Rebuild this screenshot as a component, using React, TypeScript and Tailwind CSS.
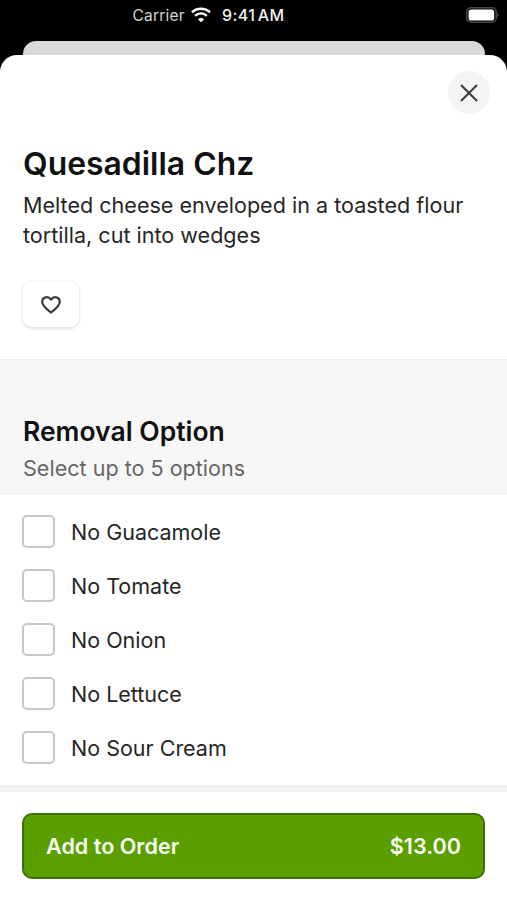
import React, { useState } from 'react';

const OPTIONS = ['No Guacamole', 'No Tomate', 'No Onion', 'No Lettuce', 'No Sour Cream'];

const StatusBar: React.FC = () => (
  <div className="h-[30px] shrink-0 flex items-center pl-[132.5px] pr-[8px] text-white">
    <span className="pt-px text-[15.5px] leading-[30px] text-[#d4d4d4] tracking-[0.2px] whitespace-nowrap w-[53px]">Carrier</span>
    <svg className="ml-[5.5px] w-[20px] h-[16px]" viewBox="0 0 20 16" fill="none" stroke="currentColor">
      <path d="M1 5.3C6 .6 14 .6 19 5.3" strokeWidth="2.6" />
      <path d="M4.1 8.8c3.5-3.1 8.3-3.1 11.8 0" strokeWidth="2.4" />
      <path d="M10 15.2 6.9 12.2c1.8-1.6 4.4-1.6 6.2 0z" fill="currentColor" stroke="none" />
    </svg>
    <span className="ml-[11px] text-[16px] leading-[30px] font-medium text-[#f2f2f2] whitespace-nowrap tracking-[0.45px] [word-spacing:-2.5px]">9:41 AM</span>
    <svg className="ml-auto w-[33px] h-[16px]" viewBox="0 0 33 16" fill="none">
      <rect x=".8" y=".8" width="29.4" height="14.4" rx="4.2" stroke="#484848" strokeWidth="1.5" />
      <rect x="2.6" y="2.5" width="25.6" height="11" rx="2.6" fill="#fff" />
      <path d="M31.3 5.6c1.6.7 1.6 4.1 0 4.8z" fill="#555" />
    </svg>
  </div>
);

const App: React.FC = () => {
  const [selected, setSelected] = useState<string[]>([]);

  const toggle = (name: string) => {
    setSelected(selected.includes(name) ? selected.filter((n) => n !== name) : [...selected, name]);
  };

  return (
    <div className="flex flex-col w-full h-[900px] bg-black overflow-hidden text-[#262626] font-['Inter',sans-serif]">
      <StatusBar />

      {/* Edge of the screen behind the sheet */}
      <div className="mt-[11px] mx-[22.5px] h-[14px] shrink-0 bg-[#d9d9d9] rounded-t-[13px]" />

      <main className="flex-1 flex flex-col bg-white rounded-t-[17px]">
        <div className="flex justify-end pt-[16px] pr-[17px]">
          <button aria-label="Close" className="w-[42px] h-[43px] rounded-full bg-[#f4f4f4] flex items-center justify-center">
            <svg className="w-[18px] h-[18px]" viewBox="0 0 18 18" fill="none" stroke="#3d3d3d" strokeWidth="2.1">
              <path d="M1 1l16 16M17 1 1 17" />
            </svg>
          </button>
        </div>

        <section className="px-[23px] pt-[30px] h-[246px] border-b border-[#ededed]">
          <h1 className="text-[31.9px] leading-[40px] font-semibold text-[#111]">Quesadilla Chz</h1>
          <p className="mt-[6px] text-[21.57px] leading-[30px] w-[450px]">
            Melted cheese enveloped in a toasted flour tortilla, cut into wedges
          </p>
          <button
            aria-label="Favorite"
            className="mt-[32px] w-[56px] h-[45px] rounded-[9px] bg-white shadow-[0_1px_3px_1px_rgba(0,0,0,0.11)] flex items-center justify-center"
          >
            <svg className="w-[20px] h-[18px]" viewBox="0 0 20 18" fill="none" stroke="#3c3c3c" strokeWidth="2.2" strokeLinejoin="round">
              <path d="M10 16.5C5.8 13.3 1.2 10 1.2 5.7c0-4.9 6.2-6 8.8-2 2.6-4 8.8-2.9 8.8 2 0 4.3-4.6 7.6-8.8 10.8z" />
            </svg>
          </button>
        </section>

        <section className="h-[134px] px-[23px] pt-[54px] bg-[#f7f7f7] border-b border-[#ededed]">
          <h2 className="text-[26.5px] leading-[34px] font-semibold text-[#111]">Removal Option</h2>
          <p className="mt-[5px] text-[21.57px] leading-[30px] text-[#666]">Select up to 5 options</p>
        </section>

        <section className="flex flex-col gap-[21px] px-[22px] pt-[21px] pb-[21px] h-[291px]">
          {OPTIONS.map((name) => (
            <label key={name} className="h-[33px] flex items-center gap-[16px] text-[21.5px] leading-[30px]">
              <input
                type="checkbox"
                checked={selected.includes(name)}
                onChange={() => toggle(name)}
                className="appearance-none w-[33px] h-[33px] rounded-[5px] border-2 border-[#c8c8c8] bg-white checked:bg-[#5a9e00]"
              />
              {name}
            </label>
          ))}
        </section>

        <footer className="border-t-[7px] border-[#f2f2f2] px-[22px] pt-[21px]">
          <button className="w-full h-[66px] px-[22px] flex items-center justify-between rounded-[10px] border-2 border-[#3f7008] bg-[#5a9e00] text-[#f8fff0] text-[21.6px] font-semibold">
            <span>Add to Order</span>
            <span>$13.00</span>
          </button>
        </footer>
      </main>
    </div>
  );
};

export default App;
